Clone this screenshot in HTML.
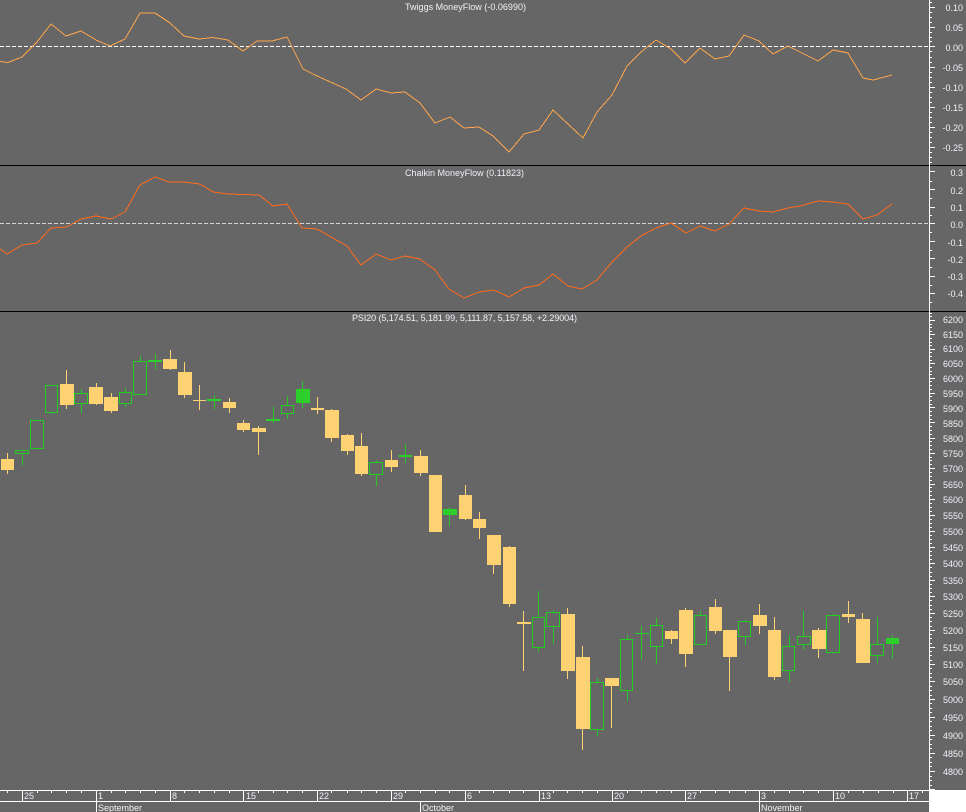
<!DOCTYPE html>
<html><head><meta charset="utf-8"><title>PSI20</title>
<style>
html,body{margin:0;padding:0;background:#666}
svg{display:block}
text{font-family:"Liberation Sans",Arial,sans-serif;font-size:9px;fill:#eef2f8}
.a text{text-anchor:end}
</style></head><body>
<svg xmlns="http://www.w3.org/2000/svg" width="966" height="812" viewBox="0 0 966 812">
<rect width="966" height="812" fill="#666"/>
<g shape-rendering="crispEdges" fill="none">
<path d="M0 46.5H929" stroke="#fff" stroke-dasharray="4 2"/>
<path d="M0 223.5H929" stroke="#d4d4d4" stroke-dasharray="4 2"/>
<polyline stroke="#ffa64d" points="0,61.5 8,62.5 22,57 37,42 51,24 66,36 81,31 96,40 110,46 125,39 140,13 155,13 170,23 184,36 199,39 213,37.5 228,40 243,51 257,41 272,41 287,37 300,63 303,69 315,75 346,89 361,100 376,89 391,93 405,92 420,103 435,123 450,117 464,128 479,127 493,136 509,152 524,134 539,130 553,110 583,138 597,112 612,95 627,66 641,52 656,40 671,49 685,63 700,48 715,59 729,56 744,35 759,41 773,54 788,46 800,52 818,61 833,50 848,53 863,78 873,80 892,75"/>
<polyline stroke="#ff6a1a" points="0,249 7,254 22,245 37,243 51,228 67,227 81,219 96,216 111,219 125,212 140,185 155,177 169,182 184,182 200,184 213,192 228,194 259,195 273,206 287,204 302,228 317,229 347,246 361,265 376,254 391,260 405,256 420,259 435,270 449,289 464,298 479,292 494,290 509,297 524,288 539,285 553,274 568,286 582,289 597,280 612,262 627,247 641,236 656,228 671,223 686,233 700,226 715,231 729,224 744,208 759,211 773,212 788,208 800,206 818,201 833,202 848,204 863,219 877,215 892,204"/>

<!-- yellow wicks -->
<path stroke="#fdd272" d="M7.5 453V474M66.5 370V409M96.5 383V405M111.5 393V413M170.5 350V370M184.5 362V398M199.5 385V410M229.5 398V413M243.5 420V432M258.5 426V455M317.5 397V414M331.5 409V442M347.5 434V455M361.5 433V476M391.5 450V472M420.5 450V476M465.5 485V520M479.5 512V539M493.5 535V574M509.5 546V607M523.5 611V671M567.5 608V679M582.5 646V750M611.5 678V728M671.5 630V644M685.5 608V667M715.5 599V634M729.5 630V691M759.5 604V634M774.5 617V680M818.5 628V658M848.5 601V623M862.5 613V619"/>
<!-- yellow bodies -->
<path fill="#fdd272" d="M1 459H14V470H1zM60 384H74V405H60zM89 387H103V404H89zM104 397H118V411H104zM163 359H177V369H163zM178 372H192V395H178zM193 400H206V401H193zM223 402H236V408H223zM237 423H250V430H237zM252 428H266V432H252zM311 408H324V410H311zM325 410H339V438H325zM341 435H354V451H341zM355 446H368V474H355zM385 460H398V467H385zM414 456H428V473H414zM429 475H442V532H429zM459 495H472V519H459zM473 519H486V528H473zM487 535H501V565H487zM503 547H516V604H503zM517 622H531V624H517zM561 614H575V671H561zM576 657H590V729H576zM605 678H619V686H605zM665 631H678V639H665zM679 610H693V654H679zM709 607H722V631H709zM723 630H737V657H723zM753 615H767V626H753zM768 630H781V677H768zM812 630H826V649H812zM842 614H855V617H842zM856 619H870V663H856z"/>
<!-- green wicks -->
<path stroke="#2ac52a" d="M22.5 454V465M37.5 419V420M51.5 413V414M81.5 389V393M81.5 404V413M125.5 388V392M125.5 404V407M140.5 356V361M287.5 396V405M287.5 414V419M376.5 460V462M376.5 475V486M538.5 591V617M538.5 648V652M553.5 610V612M553.5 627V644M597.5 678V682M597.5 730V736M627.5 635V639M627.5 691V701M656.5 618V625M656.5 647V664M700.5 611V615M745.5 620V621M745.5 637V645M789.5 635V646M789.5 671V682M803.5 611V636M803.5 645V650M833.5 614V615M877.5 617V644M877.5 656V663M155.5 354V370M214.5 395V409M273.5 407V423M302.5 381V408M405.5 444V463M449.5 507V526M641.5 626V660M892.5 635V659"/>
<!-- green hollow -->
<path stroke="#22cc22" d="M15.5 450.5H28.5V453.5H15.5zM30.5 420.5H43.5V448.5H30.5zM45.5 385.5H57.5V412.5H45.5zM74.5 393.5H87.5V403.5H74.5zM119.5 392.5H131.5V403.5H119.5zM133.5 361.5H146.5V394.5H133.5zM281.5 405.5H293.5V413.5H281.5zM369.5 462.5H382.5V474.5H369.5zM532.5 617.5H544.5V647.5H532.5zM546.5 612.5H559.5V626.5H546.5zM590.5 682.5H603.5V729.5H590.5zM620.5 639.5H632.5V690.5H620.5zM650.5 625.5H662.5V646.5H650.5zM694.5 615.5H706.5V644.5H694.5zM738.5 621.5H750.5V636.5H738.5zM782.5 646.5H794.5V670.5H782.5zM797.5 636.5H810.5V644.5H797.5zM826.5 615.5H839.5V652.5H826.5zM870.5 644.5H883.5V655.5H870.5z"/>
<!-- green filled -->
<path fill="#2dcf2d" d="M148 360H162V362H148zM207 399H221V401H207zM266 419H280V421H266zM296 389H310V403H296zM399 455H412V457H399zM443 509H457V515H443zM635 633H649V634H635zM886 638H899V644H886z"/>

<!-- separators -->
<path stroke="#000" d="M0 165.5H966M0 311.5H966"/>
<!-- right axis -->
<path stroke="#fff" d="M929.5 0V790"/>
<path stroke="#fff" d="M930 7.5h5M930 27.5h5M930 46.5h5M930 67.5h5M930 87.5h5M930 107.5h5M930 127.5h5M930 147.5h5M930 2.5h2M930 12.5h2M930 17.5h2M930 22.5h2M930 32.5h2M930 37.5h2M930 41.5h2M930 51.5h2M930 57.5h2M930 62.5h2M930 72.5h2M930 77.5h2M930 82.5h2M930 92.5h2M930 97.5h2M930 102.5h2M930 112.5h2M930 117.5h2M930 122.5h2M930 132.5h2M930 137.5h2M930 142.5h2M930 152.5h2M930 157.5h2M930 162.5h2"/>
<path stroke="#fff" d="M930 171.5h5M930 189.5h5M930 207.5h5M930 223.5h5M930 241.5h5M930 258.5h5M930 276.5h5M930 293.5h5M930 181.5h2M930 198.5h2M930 215.5h2M930 232.5h2M930 250.5h2M930 267.5h2M930 285.5h2M930 302.5h2"/>
<path stroke="#fff" d="M930 320.5h5M930 334.5h5M930 349.5h5M930 363.5h5M930 378.5h5M930 393.5h5M930 407.5h5M930 422.5h5M930 438.5h5M930 453.5h5M930 468.5h5M930 484.5h5M930 499.5h5M930 515.5h5M930 531.5h5M930 547.5h5M930 563.5h5M930 580.5h5M930 596.5h5M930 613.5h5M930 630.5h5M930 647.5h5M930 664.5h5M930 681.5h5M930 699.5h5M930 717.5h5M930 735.5h5M930 753.5h5M930 771.5h5M930 789.5h5"/>
<path stroke="#fff" d="M930 313.5h2M930 316.5h2M930 324.5h2M930 327.5h2M930 331.5h2M930 338.5h2M930 342.5h2M930 345.5h2M930 352.5h2M930 356.5h2M930 360.5h2M930 367.5h2M930 371.5h2M930 374.5h2M930 381.5h2M930 385.5h2M930 389.5h2M930 396.5h2M930 400.5h2M930 404.5h2M930 411.5h2M930 415.5h2M930 419.5h2M930 426.5h2M930 430.5h2M930 434.5h2M930 441.5h2M930 445.5h2M930 449.5h2M930 457.5h2M930 460.5h2M930 464.5h2M930 472.5h2M930 476.5h2M930 480.5h2M930 487.5h2M930 491.5h2M930 495.5h2M930 503.5h2M930 507.5h2M930 511.5h2M930 519.5h2M930 523.5h2M930 527.5h2M930 535.5h2M930 539.5h2M930 543.5h2M930 551.5h2M930 555.5h2M930 559.5h2M930 567.5h2M930 572.5h2M930 576.5h2M930 584.5h2M930 588.5h2M930 592.5h2M930 600.5h2M930 605.5h2M930 609.5h2M930 617.5h2M930 621.5h2M930 626.5h2M930 634.5h2M930 638.5h2M930 643.5h2M930 651.5h2M930 655.5h2M930 660.5h2M930 668.5h2M930 673.5h2M930 677.5h2M930 686.5h2M930 690.5h2M930 695.5h2M930 703.5h2M930 708.5h2M930 712.5h2M930 721.5h2M930 726.5h2M930 730.5h2M930 739.5h2M930 744.5h2M930 748.5h2M930 757.5h2M930 762.5h2M930 766.5h2M930 776.5h2M930 780.5h2M930 785.5h2"/>
<!-- bottom axes -->
<rect x="929" y="790" width="37" height="22" fill="#fff" stroke="none"/>
<path stroke="#fff" d="M0 790.5H929M0 801.5H929"/>
<path stroke="#fff" d="M22.5 790V801M96.5 790V801M170.5 790V801M243.5 790V801M317.5 790V801M391.5 790V801M465.5 790V801M539.5 790V801M612.5 790V801M685.5 790V801M759.5 790V801M833.5 790V801M907.5 790V801M96.5 801V812M420.5 801V812M759.5 801V812"/>
<path stroke="#fff" d="M7.5 790V793M37.5 790V793M51.5 790V793M66.5 790V793M81.5 790V793M111.5 790V793M125.5 790V793M140.5 790V793M155.5 790V793M184.5 790V793M199.5 790V793M214.5 790V793M229.5 790V793M258.5 790V793M273.5 790V793M287.5 790V793M302.5 790V793M331.5 790V793M347.5 790V793M361.5 790V793M376.5 790V793M405.5 790V793M420.5 790V793M435.5 790V793M449.5 790V793M479.5 790V793M493.5 790V793M509.5 790V793M523.5 790V793M553.5 790V793M567.5 790V793M582.5 790V793M597.5 790V793M627.5 790V793M641.5 790V793M656.5 790V793M671.5 790V793M700.5 790V793M715.5 790V793M729.5 790V793M745.5 790V793M774.5 790V793M789.5 790V793M803.5 790V793M818.5 790V793M848.5 790V793M863.5 790V793M878.5 790V793M893.5 790V793M922.5 790V793"/>
</g>

<text x="405" y="10" textLength="121" lengthAdjust="spacing">Twiggs MoneyFlow (-0.06990)</text>
<text x="405" y="176" textLength="119" lengthAdjust="spacing">Chaikin MoneyFlow (0.11823)</text>
<text x="352" y="321" textLength="225" lengthAdjust="spacing">PSI20 (5,174.51, 5,181.99, 5,111.87, 5,157.58, +2.29004)</text>

<g class="a">
<text x="963" y="11">0.10</text><text x="963" y="31">0.05</text><text x="963" y="51">0.00</text><text x="963" y="71">-0.05</text><text x="963" y="91">-0.10</text><text x="963" y="111">-0.15</text><text x="963" y="131">-0.20</text><text x="963" y="151">-0.25</text>
<text x="963" y="176">0.3</text><text x="963" y="194">0.2</text><text x="963" y="211">0.1</text><text x="963" y="228">0.0</text><text x="963" y="246">-0.1</text><text x="963" y="263">-0.2</text><text x="963" y="280">-0.3</text><text x="963" y="297">-0.4</text>
<text x="963" y="323">6200</text><text x="963" y="338">6150</text><text x="963" y="352">6100</text><text x="963" y="367">6050</text><text x="963" y="382">6000</text><text x="963" y="397">5950</text><text x="963" y="412">5900</text><text x="963" y="427">5850</text><text x="963" y="442">5800</text><text x="963" y="457">5750</text><text x="963" y="472">5700</text><text x="963" y="488">5650</text><text x="963" y="503">5600</text><text x="963" y="519">5550</text><text x="963" y="535">5500</text><text x="963" y="551">5450</text><text x="963" y="567">5400</text><text x="963" y="584">5350</text><text x="963" y="600">5300</text><text x="963" y="617">5250</text><text x="963" y="634">5200</text><text x="963" y="651">5150</text><text x="963" y="668">5100</text><text x="963" y="685">5050</text><text x="963" y="703">5000</text><text x="963" y="721">4950</text><text x="963" y="739">4900</text><text x="963" y="757">4850</text><text x="963" y="775">4800</text>
</g>

<text x="24" y="799">25</text><text x="98" y="799">1</text><text x="172" y="799">8</text><text x="246" y="799">15</text><text x="319" y="799">22</text><text x="393" y="799">29</text><text x="467" y="799">6</text><text x="541" y="799">13</text><text x="614" y="799">20</text><text x="687" y="799">27</text><text x="761" y="799">3</text><text x="835" y="799">10</text><text x="909" y="799">17</text>
<text x="98" y="811">September</text><text x="422" y="811">October</text><text x="761" y="811">November</text>
</svg>
</body></html>
